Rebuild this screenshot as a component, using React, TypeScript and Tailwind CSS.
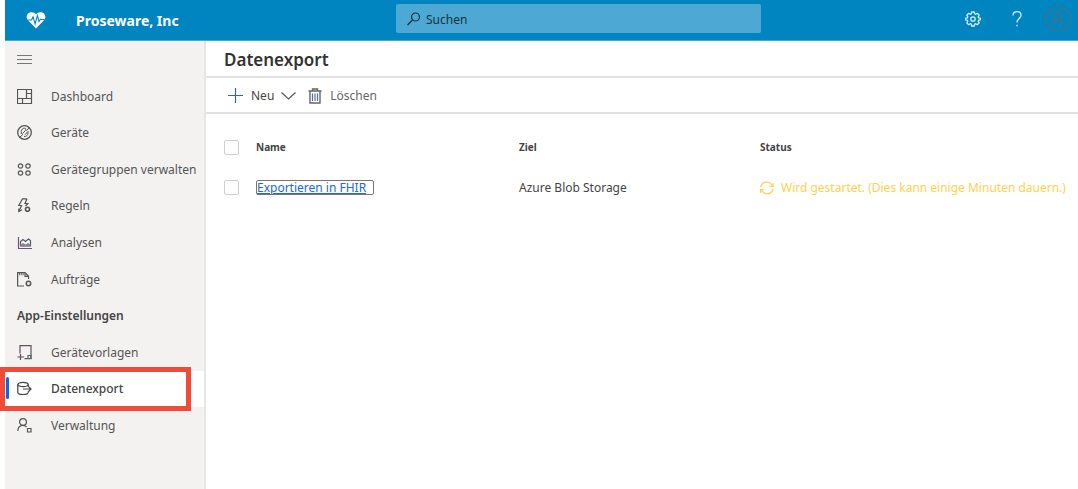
import React, { useState } from "react";

type IconProps = { children: React.ReactNode; className?: string };

function Icon({ children, className = "" }: IconProps) {
  return (
    <svg
      viewBox="0 0 16 16"
      fill="none"
      stroke="currentColor"
      strokeWidth="1.2"
      aria-hidden="true"
      className={`size-4 shrink-0 ${className}`}
    >
      {children}
    </svg>
  );
}

const icons = {
  dashboard: (
    <Icon>
      <path d="M.5.5h14v14H.5zM9.500.5v9M.5 9.500h14M9.500 4.500h5M5.500 9.500v5" />
    </Icon>
  ),
  devices: (
    <Icon>
      <circle cx="7.500" cy="7.500" r="6.800" strokeWidth="1.300" />
      <path d="M2.700 12.300 6 9.300M12.300 2.700 9.500 5.700" strokeWidth="1" />
      <path d="M4.300 9V6.500c0-2 1.500-3.300 3.300-3.300 1.400 0 1.700 1.300.8 2.300L5.500 8.700" strokeWidth="1" />
      <path d="M7 11.500c2.300.2 4-1.300 4-3.500V6.500L8 9.700" strokeWidth="1" />
    </Icon>
  ),
  groups: (
    <Icon>
      <circle cx="3.500" cy="4" r="2.200" />
      <circle cx="11" cy="4" r="2.200" />
      <circle cx="3.500" cy="11" r="2.200" />
      <circle cx="11" cy="11" r="2.200" />
    </Icon>
  ),
  rules: (
    <Icon>
      <path d="M10 .8H5.500L1.800 7.500h2.700L2 13.300M10 .8 8 5.500h2.800L8.500 8" />
      <path d="M1.800 10.500v3l3.200-1.700" />
      <circle cx="10.500" cy="11.200" r="2" strokeWidth="1.600" />
    </Icon>
  ),
  analytics: (
    <Icon>
      <path d="M1.500 2v11.500H15" stroke="#76507c" />
      <path d="M3.500 11V6.500l2.500-2 2.500 2 3-2.500 2 1.500V11z" stroke="#555a68" />
      <path d="M3.500 9.500 6 8l2.500 1.500L11 8l2.500 1.500v2h-10z" fill="#8a8590" stroke="none" />
    </Icon>
  ),
  jobs: (
    <Icon>
      <path d="M7 14H.6V.6H8L11.500 4v3M8 .6V4.300h3.500" />
      <path d="M2.500 1v2.300M4.300 1v2.300M6.100 1v2.300" strokeWidth=".9" />
      <circle cx="11.500" cy="11.500" r="2.200" strokeWidth="1.500" />
    </Icon>
  ),
  templates: (
    <Icon>
      <path d="M3 8.500V.6h11v13H7.500" stroke="#63505f" />
      <path d="M.5 12h6.500M3.500 9v6" />
      <path d="M11 13.500v-3h3v3z" stroke="#4a7058" />
    </Icon>
  ),
  dataExport: (
    <Icon>
      <ellipse cx="6" cy="3.500" rx="5.200" ry="2.200" />
      <path d="M.8 3.500v7.700c0 1.300 2.300 2.300 5.200 2.300s5.200-1 5.200-2.300M11.200 3.500v2M6 8h8M11 5l3 3-3 3" />
    </Icon>
  ),
  admin: (
    <Icon>
      <circle cx="6" cy="4" r="3.400" />
      <path d="M.8 13C1 9.500 3.300 7.400 6 7.400c1.500 0 2.600.5 3.500 1.600" />
      <path d="M10.500 10.500H14V14h-3.500z" />
    </Icon>
  ),
};

type NavEntry = { label: string; icon: React.ReactNode; active?: boolean };

const mainNav: NavEntry[] = [
  { label: "Dashboard", icon: icons.dashboard },
  { label: "Geräte", icon: icons.devices },
  { label: "Gerätegruppen verwalten", icon: icons.groups },
  { label: "Regeln", icon: icons.rules },
  { label: "Analysen", icon: icons.analytics },
  { label: "Aufträge", icon: icons.jobs },
];

const settingsNav: NavEntry[] = [
  { label: "Gerätevorlagen", icon: icons.templates },
  { label: "Datenexport", icon: icons.dataExport, active: true },
  { label: "Verwaltung", icon: icons.admin },
];

function NavItem({ label, icon, active }: NavEntry) {
  return (
    <a
      href="#"
      aria-current={active ? "page" : undefined}
      className={`relative flex h-9 items-center gap-[18px] pl-3 text-[12px] whitespace-nowrap ${
        active ? "bg-white font-medium text-[#444]" : "text-[#555]"
      }`}
    >
      {active && (
        <>
          <span className="absolute top-1.5 left-px h-[22px] w-[3px] rounded-full bg-[#0f62f5]" />
          <span className="pointer-events-none absolute -top-1 -left-[5px] h-11 w-[191px] border-[5px] border-[#f04a38]" />
        </>
      )}
      {icon}
      {label}
    </a>
  );
}

function Header() {
  return (
    <header className="flex h-[41px] items-center border-b border-[#4ba8d2] bg-[#0085c1] text-white">
      <div className="flex w-[391px] shrink-0 items-center gap-[30px] pl-[21px]">
        <svg viewBox="0 0 20 18" className="h-[18px] w-5" aria-hidden="true">
          <path
            d="M10 17.500 2.200 9.500C-2.500 4 4.500-2 10 3.200 15.500-2 22.500 4 17.800 9.500z"
            fill="currentColor"
          />
          <path
            d="M1.500 9h4l1.600-3.200 2 7 2.300-8.300 1.600 6L14.300 8.500h4.200"
            fill="none"
            stroke="#0085c1"
            strokeWidth="1.100"
          />
        </svg>
        <span className="text-[14px] font-bold">Proseware, Inc</span>
      </div>
      <label className="mb-[3px] flex h-[29px] w-[34%] items-center gap-1 rounded-xs bg-[#4da8d3] pl-2.5 text-[#17323f]">
        <Icon>
          <circle cx="9.500" cy="6" r="4" />
          <path d="M6.500 9 1.500 14" />
        </Icon>
        <input
          type="search"
          aria-label="Suchen"
          placeholder="Suchen"
          className="min-w-0 flex-1 bg-transparent pt-0.5 text-[12px] outline-none placeholder:text-[#17323f]"
        />
      </label>
      <div className="mb-0.5 ml-auto flex items-center pr-[7px]">
        <button type="button" aria-label="Einstellungen" className="mr-7">
          <Icon className="text-[#d8eef8]">
            <path
              d="M6.300 2.900 6.700 1h2.600l.4 1.900 1 .4 1.600-1 1.900 1.900-1 1.600.4 1 1.900.4v1.600l-1.900.4-.4 1 1 1.600-1.900 1.900-1.600-1-1 .4L9.300 15H6.700l-.4-1.900-1-.4-1.600 1-1.900-1.900 1-1.600-.4-1L.5 8.800V7.200l1.900-.4.4-1-1-1.600 1.900-1.900 1.600 1z"
              strokeLinejoin="round"
              strokeWidth="1.300"
            />
            <circle cx="8" cy="8" r="2.200" strokeWidth="1.300" />
          </Icon>
        </button>
        <button type="button" aria-label="Hilfe" className="mr-5">
          <Icon className="text-[#d8eef8]">
            <path d="M4 4.500C4 2 5.700.7 8 .7s4 1.400 4 3.600C12 7.500 8 7.500 8 11.500" strokeWidth="1.300" />
            <path d="M8 13.800v1.500" strokeWidth="1.400" />
          </Icon>
        </button>
        <button type="button" aria-label="Konto" className="text-[#427389]">
          <svg viewBox="0 0 26 26" fill="none" stroke="currentColor" className="size-[26px]" aria-hidden="true">
            <circle cx="13" cy="13" r="12.400" strokeWidth="1.200" />
            <circle cx="13" cy="10.500" r="3.700" strokeWidth="1.500" />
            <path d="M7.800 19.500c.3-3.300 2.400-5.200 5.200-5.200s4.900 1.900 5.200 5.200" strokeWidth="1.500" />
          </svg>
        </button>
      </div>
    </header>
  );
}

function Sidebar() {
  return (
    <aside className="w-[201px] shrink-0 border-r-2 border-[#e6e6e6] bg-[#f3f2f1]">
      <nav className="flex h-[403px] flex-col justify-between pt-px">
        <button type="button" aria-label="Menü" className="flex h-9 items-center pl-3 text-[#777]">
          <Icon>
            <path d="M0 3.500h15M0 7.500h15M0 11.500h15" />
          </Icon>
        </button>
        {mainNav.map((item) => (
          <NavItem key={item.label} {...item} />
        ))}
        <h2 className="flex h-9 items-center pl-3 text-[12px] font-semibold text-[#444]">App-Einstellungen</h2>
        {settingsNav.map((item) => (
          <NavItem key={item.label} {...item} />
        ))}
      </nav>
    </aside>
  );
}

function Toolbar() {
  return (
    <div className="flex h-9 items-center border-b-2 border-[#e1e1e1] pt-px pl-[22px] text-[12px] text-[#444]">
      <button type="button" className="flex items-center gap-[7px]">
        <Icon className="text-[#3c6a85]">
          <path d="M7.500 0v15M0 7.500h15" />
        </Icon>
        Neu
        <Icon className="text-[#555]">
          <path d="m.5 4.500 7 6.500 7-6.500" />
        </Icon>
      </button>
      <button type="button" className="ml-2.5 flex items-center gap-[7px] text-[#666]">
        <Icon>
          <path d="M1.500 3h13M5.500 3V1h5v2M3 3v12h10V3" strokeWidth="1.400" />
          <path d="M5.500 5.500V13M8 5.500V13M10.500 5.500V13" stroke="#5b6f8f" />
        </Icon>
        Löschen
      </button>
    </div>
  );
}

function Check({ label }: { label: string }) {
  const [checked, setChecked] = useState(false);
  return (
    <input
      type="checkbox"
      aria-label={label}
      checked={checked}
      onChange={() => setChecked(!checked)}
      className="block size-[15px] appearance-none rounded-xs border border-[#d0d0d0] bg-white checked:bg-[#0f62f5]"
    />
  );
}

function ExportTable() {
  return (
    <table className="mt-[13px] w-full table-fixed text-left text-[#444]">
      <colgroup>
        <col className="w-[50px]" />
        <col className="w-[263px]" />
        <col className="w-[241px]" />
        <col />
      </colgroup>
      <thead>
        <tr className="h-10 text-[10px]">
          <th className="pl-[18px]">
            <Check label="Alle auswählen" />
          </th>
          <th className="font-bold">Name</th>
          <th className="font-bold">Ziel</th>
          <th className="font-bold">Status</th>
        </tr>
      </thead>
      <tbody>
        <tr className="h-10 text-[12px]">
          <td className="pl-[18px]">
            <Check label="Exportieren in FHIR auswählen" />
          </td>
          <td>
            <a
              href="#"
              className="flex h-[15px] w-[118px] items-center rounded-xs border border-[#777] pt-0.5 whitespace-nowrap text-[#2169d8] underline"
            >
              Exportieren in FHIR
            </a>
          </td>
          <td className="pt-0.5">Azure Blob Storage</td>
          <td className="pt-0.5">
            <span className="flex items-center gap-1.5 whitespace-nowrap text-[#ffd050]">
              <Icon className="-ml-px">
                <path d="M1.500 7C2.200 4 4.800 2.200 7.500 2.200c2.600 0 4.700 1.400 5.700 3.800M14 3v3.500h-3.500M14 9c-.7 3-3.300 4.800-6 4.800-2.600 0-4.700-1.400-5.700-3.800M1.500 13V9.500H5" />
              </Icon>
              Wird gestartet. (Dies kann einige Minuten dauern.)
            </span>
          </td>
        </tr>
      </tbody>
    </table>
  );
}

export default function App() {
  return (
    <div className="flex min-h-screen flex-col bg-white pl-[5px] font-['Noto_Sans','Open_Sans',sans-serif]">
      <Header />
      <div className="flex flex-1">
        <Sidebar />
        <main className="min-w-0 flex-1">
          <h1 className="flex h-[37px] items-center border-b-2 border-[#e1e1e1] pt-0.5 pl-[18px] text-[17px] font-semibold text-[#333]">
            Datenexport
          </h1>
          <Toolbar />
          <ExportTable />
        </main>
      </div>
    </div>
  );
}
